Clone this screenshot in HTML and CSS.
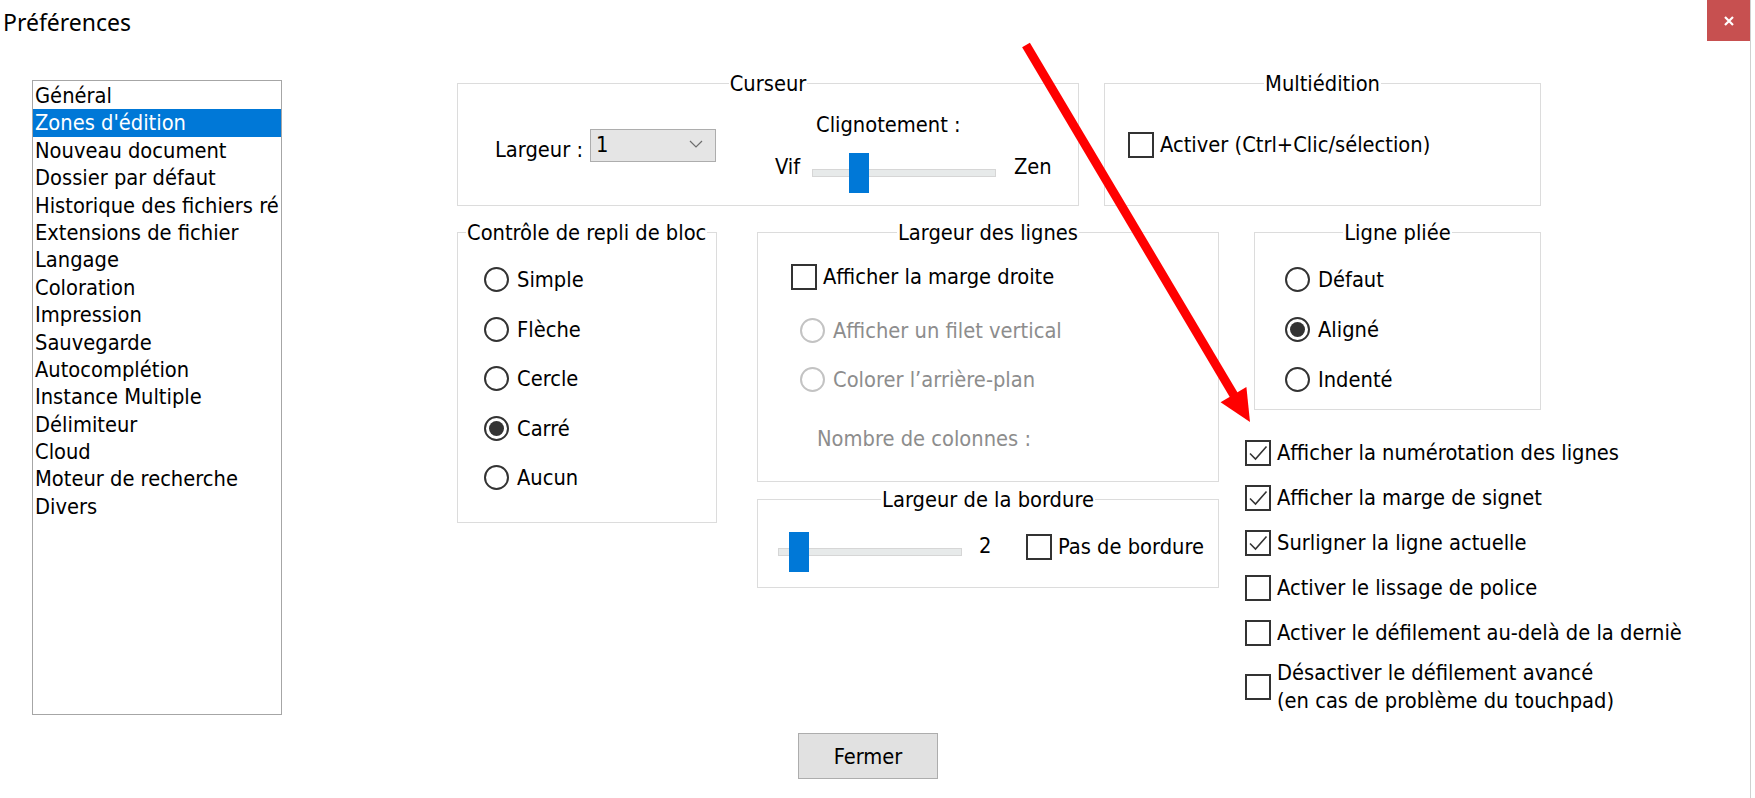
FILE: index.html
```html
<!DOCTYPE html>
<html lang="fr">
<head>
<meta charset="utf-8">
<title>Préférences</title>
<link rel="stylesheet" href="styles.css">
</head>
<body>
<div class="window">
  <header class="titlebar">
    <div class="title">Préférences</div>
    <div class="close">
      <svg width="12" height="12" viewBox="0 0 12 12"><path d="M2 2 L10 10 M10 2 L2 10" stroke="#fff" stroke-width="2.2" fill="none"/></svg>
    </div>
  </header>

  <main class="content">
    <div class="listbox">
      <div class="item">Général</div>
      <div class="item sel">Zones d'édition</div>
      <div class="item">Nouveau document</div>
      <div class="item">Dossier par défaut</div>
      <div class="item">Historique des fichiers ré</div>
      <div class="item">Extensions de fichier</div>
      <div class="item">Langage</div>
      <div class="item">Coloration</div>
      <div class="item">Impression</div>
      <div class="item">Sauvegarde</div>
      <div class="item">Autocomplétion</div>
      <div class="item">Instance Multiple</div>
      <div class="item">Délimiteur</div>
      <div class="item">Cloud</div>
      <div class="item">Moteur de recherche</div>
      <div class="item">Divers</div>
    </div>

    <div class="options">
      <div class="row1">
        <fieldset class="gb gb-curseur">
          <legend class="lg lg-center">Curseur</legend>
          <div class="curseur-body">
            <span class="lbl-largeur">Largeur :</span>
            <div class="combo">
              <span class="combo-val">1</span>
              <svg class="chev" width="14" height="8" viewBox="0 0 14 8"><path d="M1 1 L7 7 L13 1" stroke="#6d6d6d" stroke-width="1.2" fill="none"/></svg>
            </div>
            <div class="blink">
              <div class="blink-title">Clignotement :</div>
              <div class="blink-row">
                <span class="vif">Vif</span>
                <div class="slider"><div class="track"></div><div class="thumb" style="left:37px"></div></div>
                <span class="zen">Zen</span>
              </div>
            </div>
          </div>
        </fieldset>

        <fieldset class="gb gb-multi">
          <legend class="lg lg-center">Multiédition</legend>
          <div class="multi-body">
            <label class="cb"><span class="box"></span><span>Activer (Ctrl+Clic/sélection)</span></label>
          </div>
        </fieldset>
      </div>

      <div class="row2">
        <fieldset class="gb gb-repli">
          <legend class="lg lg-left">Contrôle de repli de bloc</legend>
          <div class="repli-body">
            <label class="rb"><span class="radio"></span><span>Simple</span></label>
            <label class="rb"><span class="radio"></span><span>Flèche</span></label>
            <label class="rb"><span class="radio"></span><span>Cercle</span></label>
            <label class="rb"><span class="radio on"></span><span>Carré</span></label>
            <label class="rb"><span class="radio"></span><span>Aucun</span></label>
          </div>
        </fieldset>

        <div class="col-b">
          <fieldset class="gb gb-lignes">
            <legend class="lg lg-center">Largeur des lignes</legend>
            <div class="lignes-body">
              <label class="cb"><span class="box"></span><span>Afficher la marge droite</span></label>
              <label class="rb rb-dis rb-first"><span class="radio"></span><span>Afficher un filet vertical</span></label>
              <label class="rb rb-dis rb-second"><span class="radio"></span><span>Colorer l’arrière-plan</span></label>
              <div class="colonnes">Nombre de colonnes :</div>
            </div>
          </fieldset>

          <fieldset class="gb gb-bordure">
            <legend class="lg lg-center">Largeur de la bordure</legend>
            <div class="bordure-body">
              <div class="slider"><div class="track"></div><div class="thumb" style="left:11px"></div></div>
              <span class="val">2</span>
              <label class="cb cb-bordure"><span class="box"></span><span>Pas de bordure</span></label>
            </div>
          </fieldset>
        </div>

        <div class="col-c">
          <fieldset class="gb gb-pliee">
            <legend class="lg lg-center">Ligne pliée</legend>
            <div class="pliee-body">
              <label class="rb"><span class="radio"></span><span>Défaut</span></label>
              <label class="rb"><span class="radio on"></span><span>Aligné</span></label>
              <label class="rb"><span class="radio"></span><span>Indenté</span></label>
            </div>
          </fieldset>

          <div class="checklist">
            <label class="cb"><span class="box checked"><svg width="22" height="22" viewBox="0 0 22 22"><path d="M3 11.5 L8.5 17 L19.5 4.5" stroke="#333" stroke-width="1.6" fill="none"/></svg></span><span>Afficher la numérotation des lignes</span></label>
            <label class="cb"><span class="box checked"><svg width="22" height="22" viewBox="0 0 22 22"><path d="M3 11.5 L8.5 17 L19.5 4.5" stroke="#333" stroke-width="1.6" fill="none"/></svg></span><span>Afficher la marge de signet</span></label>
            <label class="cb"><span class="box checked"><svg width="22" height="22" viewBox="0 0 22 22"><path d="M3 11.5 L8.5 17 L19.5 4.5" stroke="#333" stroke-width="1.6" fill="none"/></svg></span><span>Surligner la ligne actuelle</span></label>
            <label class="cb"><span class="box"></span><span>Activer le lissage de police</span></label>
            <label class="cb"><span class="box"></span><span class="clip">Activer le défilement au-delà de la derniè</span></label>
            <label class="cb cb-two"><span class="box"></span><span>Désactiver le défilement avancé<br>(en cas de problème du touchpad)</span></label>
          </div>
        </div>
      </div>
    </div>
  </main>

  <footer class="footer">
    <button class="btn" type="button">Fermer</button>
  </footer>

  <svg class="arrow" width="1755" height="798" viewBox="0 0 1755 798">
    <line x1="1026" y1="45" x2="1236.6" y2="399.7" stroke="#ff0000" stroke-width="9"/>
    <polygon points="1220.6,402.3 1246.4,386.9 1250,422" fill="#ff0000"/>
  </svg>
</div>
</body>
</html>
```

FILE: styles.css
```css
html, body {
  margin: 0;
  padding: 0;
  background: #ffffff;
}

body {
  font-family: "DejaVu Sans Condensed", "DejaVu Sans", sans-serif;
  font-stretch: semi-condensed;
  font-size: 21.7px;
  line-height: 27px;
  color: #000;
}

.window {
  position: relative;
  width: 1750px;
  height: 798px;
  border-right: 1px solid #d0d0d0;
  overflow: hidden;
}

/* Title bar */
.titlebar {
  display: flex;
  justify-content: space-between;
  align-items: flex-start;
  height: 41px;
}

.title {
  font-family: "Noto Sans", sans-serif;
  font-stretch: normal;
  font-size: 23px;
  line-height: 39px;
  margin-top: 3px;
  padding-left: 3px;
}

.close {
  width: 43px;
  height: 41px;
  background: #c75050;
  display: flex;
  align-items: center;
  justify-content: center;
}

/* Main content */
.content {
  display: flex;
  align-items: flex-start;
  padding-left: 32px;
  margin-top: 29px;
}

.listbox {
  width: 250px;
  height: 635px;
  box-sizing: border-box;
  border: 1px solid #a6a6a6;
  margin-top: 10px;
  padding-top: 1px;
  overflow: hidden;
  flex: none;
}

.item {
  line-height: 27.4px;
  height: 27.4px;
  padding-left: 2px;
  white-space: nowrap;
  overflow: hidden;
}

.item.sel {
  background: #0078d7;
  color: #fff;
}

.options {
  margin-left: 175px;
  display: flex;
  flex-direction: column;
}

.row1 {
  display: flex;
  gap: 25px;
}

.row2 {
  display: flex;
  align-items: flex-start;
  margin-top: 13px;
}

/* Group boxes */
.gb {
  margin: 0;
  padding: 0;
  border: 1px solid #dcdcdc;
  box-sizing: border-box;
  min-width: 0;
}

.lg {
  padding: 0 1px;
  line-height: 27px;
  height: 27px;
  background: #fff;
}

.lg-center {
  margin-left: auto;
  margin-right: auto;
}

.lg-left {
  margin-left: 8px;
}

.gb-curseur { width: 622px; height: 136px; }
.gb-multi   { width: 437px; height: 136px; }
.gb-repli   { width: 260px; height: 304px; }
.gb-lignes  { width: 462px; height: 263px; }
.gb-bordure { width: 462px; height: 102px; margin-top: 4px; }
.gb-pliee   { width: 287px; height: 191px; margin-left: 9px; }

.col-b {
  margin-left: 40px;
  display: flex;
  flex-direction: column;
}

.col-c {
  margin-left: 26px;
  width: 505px;
  display: flex;
  flex-direction: column;
}

/* Curseur */
.curseur-body {
  display: flex;
  align-items: flex-start;
  padding: 14px 0 0 37px;
}

.lbl-largeur {
  width: 95px;
  margin-top: 25px;
  white-space: nowrap;
  flex: none;
}

.combo {
  width: 126px;
  height: 33px;
  box-sizing: border-box;
  margin-top: 18px;
  background: #e5e5e5;
  border: 1px solid #adadad;
  display: flex;
  align-items: center;
  justify-content: space-between;
  padding: 0 12px 0 5px;
  flex: none;
}

.combo-val {
  line-height: 27px;
  margin-top: -2px;
}

.chev {
  display: block;
  margin-top: -4px;
}

.blink {
  margin-left: 59px;
  display: flex;
  flex-direction: column;
}

.blink-title {
  padding-left: 41px;
  white-space: nowrap;
}

.blink-row {
  display: flex;
  align-items: flex-start;
  margin-top: 15px;
}

.vif {
  width: 37px;
  flex: none;
}

.zen {
  margin-left: 18px;
}

/* Slider */
.slider {
  position: relative;
  width: 184px;
  height: 40px;
  flex: none;
  display: flex;
  align-items: center;
}

.track {
  width: 100%;
  height: 8px;
  box-sizing: border-box;
  background: #e7eaea;
  border: 1px solid #d6d6d6;
}

.thumb {
  position: absolute;
  top: 0;
  width: 20px;
  height: 40px;
  background: #0078d7;
}

/* Checkboxes and radios */
.cb, .rb {
  display: flex;
  align-items: center;
  white-space: nowrap;
}

.cb { gap: 6px; }
.rb { gap: 8px; }

.box {
  width: 26px;
  height: 26px;
  box-sizing: border-box;
  border: 2px solid #333;
  background: #fff;
  flex: none;
  display: flex;
  align-items: center;
  justify-content: center;
}

.box svg {
  display: block;
}

.radio {
  width: 25px;
  height: 25px;
  box-sizing: border-box;
  border: 2px solid #333;
  border-radius: 50%;
  flex: none;
  display: flex;
  align-items: center;
  justify-content: center;
}

.radio.on::after {
  content: "";
  width: 15px;
  height: 15px;
  border-radius: 50%;
  background: #333;
}

.rb-dis {
  color: #8d8d8d;
}

.rb-dis .radio {
  border-color: #c3c3c3;
}

/* Multiédition */
.multi-body {
  padding: 34px 0 0 23px;
}

/* Contrôle de repli */
.repli-body {
  padding: 20px 0 0 26px;
  display: flex;
  flex-direction: column;
  gap: 22.5px;
}

/* Largeur des lignes */
.lignes-body {
  padding: 17px 0 0 33px;
  display: flex;
  flex-direction: column;
  align-items: flex-start;
}

.rb-first {
  margin-top: 26.5px;
  margin-left: 9px;
}

.rb-second {
  margin-top: 22px;
  margin-left: 9px;
}

.colonnes {
  margin-top: 32px;
  padding-left: 26px;
  color: #8d8d8d;
}

/* Largeur de la bordure */
.bordure-body {
  display: flex;
  align-items: flex-start;
  padding: 19px 0 0 20px;
}

.val {
  width: 47px;
  margin-left: 17px;
  flex: none;
}

.cb-bordure {
  margin-top: 1px;
}

/* Ligne pliée */
.pliee-body {
  padding: 19.5px 0 0 30px;
  display: flex;
  flex-direction: column;
  gap: 23px;
}

/* Right checklist */
.checklist {
  margin-top: 29px;
  display: flex;
  flex-direction: column;
  gap: 18px;
}

.clip {
  overflow: hidden;
}

.cb-two {
  margin-top: -5px;
  line-height: 28px;
}

/* Footer */
.footer {
  padding-left: 798px;
  margin-top: 18px;
}

.btn {
  width: 140px;
  height: 46px;
  box-sizing: border-box;
  background: #e1e1e1;
  border: 1px solid #adadad;
  border-radius: 0;
  font: inherit;
  font-size: 21.7px;
  line-height: 27px;
  color: #000;
  padding: 0;
  margin: 0;
}

/* Annotation arrow */
.arrow {
  position: absolute;
  left: 0;
  top: 0;
  pointer-events: none;
}
```
